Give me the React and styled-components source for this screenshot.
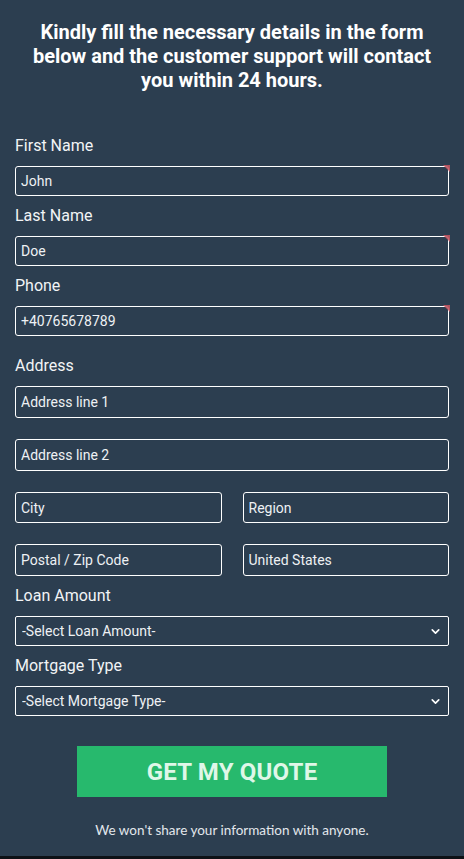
import React from 'react'
import styled, { createGlobalStyle } from 'styled-components'
import { ChevronDown } from 'lucide-react'

const GlobalStyle = createGlobalStyle`
  html {
    background: #0d1116;
  }
  body {
    margin: 0;
    font-family: Roboto, "Liberation Sans", Arial, sans-serif;
  }
  * {
    box-sizing: border-box;
  }
`

const Page = styled.div`
  background: #2c3e50;
  min-height: 856px;
  padding: 20px 15px 0;
  color: #f4f6f8;
`

const Heading = styled.h2`
  margin: 0 0 44px;
  font-size: 20px;
  line-height: 24px;
  font-weight: 700;
  text-align: center;
  color: #ffffff;
  padding: 0 10px;
`

const Form = styled.form`
  display: flex;
  flex-direction: column;
`

const Group = styled.div`
  display: flex;
  flex-direction: column;
  margin-bottom: ${(p) => p.$after ?? 10}px;
`

const Label = styled.label`
  font-size: 16px;
  line-height: normal;
  color: #f2f4f6;
  margin-bottom: 11px;
`

const FieldWrap = styled.div`
  position: relative;
  margin-bottom: ${(p) => p.$after || 0}px;
`

// little red corner marking a required field
const Required = styled.span`
  position: absolute;
  top: -1px;
  right: -1px;
  width: 0;
  height: 0;
  border-top: 7px solid rgba(196, 86, 98, 0.85);
  border-left: 7px solid transparent;
  pointer-events: none;
`

const Input = styled.input`
  display: block;
  width: 100%;
  height: ${(p) => p.$h || 30}px;
  padding: 0 5px;
  background: transparent;
  border: 1.5px solid #ffffff;
  border-radius: 3px;
  color: #eef1f4;
  font-family: Roboto, "Liberation Sans", Arial, sans-serif;
  font-size: 14px;
  outline: none;

  &::placeholder {
    color: #eef1f4;
    opacity: 1;
  }
`

const Row = styled.div`
  display: grid;
  grid-template-columns: 1fr 1fr;
  column-gap: 21px;
  margin-bottom: ${(p) => p.$after || 0}px;
`

const Select = styled.select`
  display: block;
  width: 100%;
  height: 30px;
  padding: 0 24px 0 6px;
  background: #2c3e50;
  border: 1.5px solid #ffffff;
  border-radius: 2px;
  color: #eef1f4;
  font-family: Roboto, "Liberation Sans", Arial, sans-serif;
  font-size: 14px;
  appearance: none;
  outline: none;
`

const Chevron = styled(ChevronDown)`
  position: absolute;
  right: 7px;
  top: 9px;
  color: #ffffff;
  pointer-events: none;
`

const Button = styled.button`
  align-self: center;
  width: 310px;
  height: 51px;
  margin-top: 30px;
  background: #27b96d;
  border: none;
  color: #dff7e8;
  font-family: Roboto, "Liberation Sans", Arial, sans-serif;
  font-size: 24px;
  font-weight: 700;
  letter-spacing: 0.2px;
  cursor: pointer;
`

const Note = styled.p`
  margin: 25px 0 0;
  text-align: center;
  font-family: Lato, "Open Sans", sans-serif;
  font-size: 13.5px;
  color: #e3e7ec;
`

function App() {
  return (
    <>
      <GlobalStyle />
      <Page>
        <Heading>
          Kindly fill the necessary details in the form below and the customer support will contact you within 24 hours.
        </Heading>
        <Form onSubmit={(e) => e.preventDefault()}>
          <Group>
            <Label>First Name</Label>
            <FieldWrap>
              <Input defaultValue="John" />
              <Required />
            </FieldWrap>
          </Group>
          <Group>
            <Label>Last Name</Label>
            <FieldWrap>
              <Input defaultValue="Doe" />
              <Required />
            </FieldWrap>
          </Group>
          <Group $after={20}>
            <Label>Phone</Label>
            <FieldWrap>
              <Input defaultValue="+40765678789" />
              <Required />
            </FieldWrap>
          </Group>
          <Group>
            <Label>Address</Label>
            <FieldWrap $after={21}>
              <Input $h={32} placeholder="Address line 1" />
            </FieldWrap>
            <FieldWrap $after={21}>
              <Input $h={32} placeholder="Address line 2" />
            </FieldWrap>
            <Row $after={21}>
              <Input $h={31} placeholder="City" />
              <Input $h={31} placeholder="Region" />
            </Row>
            <Row>
              <Input $h={32} placeholder="Postal / Zip Code" />
              <Input $h={32} defaultValue="United States" />
            </Row>
          </Group>
          <Group>
            <Label>Loan Amount</Label>
            <FieldWrap>
              <Select defaultValue="">
                <option value="">-Select Loan Amount-</option>
              </Select>
              <Chevron size={13} strokeWidth={3} />
            </FieldWrap>
          </Group>
          <Group $after={0}>
            <Label>Mortgage Type</Label>
            <FieldWrap>
              <Select defaultValue="">
                <option value="">-Select Mortgage Type-</option>
              </Select>
              <Chevron size={13} strokeWidth={3} />
            </FieldWrap>
          </Group>
          <Button type="submit">GET MY QUOTE</Button>
          <Note>We won't share your information with anyone.</Note>
        </Form>
      </Page>
    </>
  )
}

export default App
